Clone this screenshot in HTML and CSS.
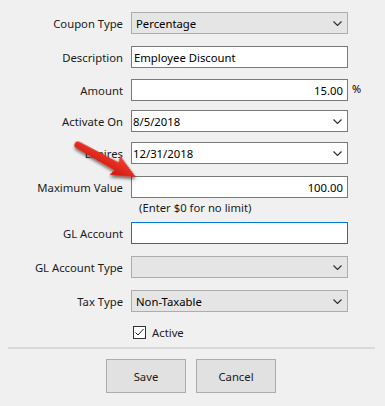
FILE: index.html
```html
<!DOCTYPE html>
<html>
<head>
<meta charset="utf-8">
<link rel="stylesheet" href="styles.css">
</head>
<body>
<div class="form">
  <div class="row">
    <span class="lbl">Coupon Type</span>
    <div class="combo"><span class="val pad5">Percentage</span><svg class="chev" width="9" height="5" viewBox="0 0 9 5"><path d="M0.5 0.5 L4.5 4.5 L8.5 0.5" fill="none" stroke="#333" stroke-width="1.2"/></svg></div>
  </div>
  <div class="row mt12">
    <span class="lbl">Description</span>
    <div class="text"><span class="val pad2">Employee Discount</span></div>
  </div>
  <div class="row mt11">
    <span class="lbl">Amount</span>
    <div class="text num"><span class="val">15.00</span></div>
    <span class="unit">%</span>
  </div>
  <div class="row mt9">
    <span class="lbl">Activate On</span>
    <div class="text date"><span class="val pad1">8/5/2018</span><svg class="chev" width="9" height="5" viewBox="0 0 9 5"><path d="M0.5 0.5 L4.5 4.5 L8.5 0.5" fill="none" stroke="#333" stroke-width="1.2"/></svg></div>
  </div>
  <div class="row mt10">
    <span class="lbl">Expires</span>
    <div class="text date"><span class="val pad1">12/31/2018</span><svg class="chev" width="9" height="5" viewBox="0 0 9 5"><path d="M0.5 0.5 L4.5 4.5 L8.5 0.5" fill="none" stroke="#333" stroke-width="1.2"/></svg></div>
  </div>
  <div class="row mt12">
    <span class="lbl">Maximum Value</span>
    <div class="text num"><span class="val">100.00</span></div>
  </div>
  <div class="hint">(Enter $0 for no limit)</div>
  <div class="row mt6">
    <span class="lbl">GL Account</span>
    <div class="text focus"></div>
  </div>
  <div class="row mt12">
    <span class="lbl">GL Account Type</span>
    <div class="combo"><span class="val pad5"></span><svg class="chev" width="9" height="5" viewBox="0 0 9 5"><path d="M0.5 0.5 L4.5 4.5 L8.5 0.5" fill="none" stroke="#333" stroke-width="1.2"/></svg></div>
  </div>
  <div class="row mt12">
    <span class="lbl">Tax Type</span>
    <div class="combo"><span class="val pad5">Non-Taxable</span><svg class="chev" width="9" height="5" viewBox="0 0 9 5"><path d="M0.5 0.5 L4.5 4.5 L8.5 0.5" fill="none" stroke="#333" stroke-width="1.2"/></svg></div>
  </div>
  <div class="check-row">
    <span class="cb"><svg width="11" height="11" viewBox="0 0 11 11"><path d="M1.5 5.5 L4 8 L9.5 2" fill="none" stroke="#222" stroke-width="1"/></svg></span>
    <span class="cb-label">Active</span>
  </div>
</div>
<div class="sep"></div>
<div class="buttons">
  <button class="btn">Save</button>
  <button class="btn">Cancel</button>
</div>
<svg class="arrow" width="80" height="56" viewBox="0 0 80 56">
  <defs>
    <filter id="sh" x="-20%" y="-20%" width="150%" height="160%">
      <feDropShadow dx="1.5" dy="2" stdDeviation="1.6" flood-color="#000" flood-opacity="0.55"/>
    </filter>
    <linearGradient id="rg" x1="0" y1="0" x2="0" y2="1">
      <stop offset="0" stop-color="#f2402e"/>
      <stop offset="1" stop-color="#cc140e"/>
    </linearGradient>
  </defs>
  <g transform="translate(7,8) rotate(28.9)" filter="url(#sh)">
    <path d="M0 -3.6 L44 -4.6 L42 -11 L66 0 L42 11 L44 4.6 L0 3.6 A3.6 3.6 0 0 1 0 -3.6 Z" fill="url(#rg)"/>
  </g>
</svg>
</body>
</html>
```
FILE: styles.css
```css
html, body {
  margin: 0;
  padding: 0;
  background: #f0f0f0;
}
body {
  position: relative;
  width: 385px;
  height: 406px;
  overflow: hidden;
  font-family: "Noto Sans", "Open Sans", sans-serif;
  font-size: 11.3px;
  color: #000;
}
.form {
  padding-top: 12px;
}
.row {
  display: grid;
  grid-template-columns: 123px 217px auto;
  column-gap: 8px;
  align-items: center;
  height: 22px;
}
.mt6 { margin-top: 6px; }
.mt9 { margin-top: 9px; }
.mt10 { margin-top: 10px; }
.mt11 { margin-top: 11px; }
.mt12 { margin-top: 12px; }
.lbl {
  text-align: right;
  color: #1b1b1b;
  white-space: nowrap;
}
.combo, .text {
  box-sizing: border-box;
  height: 22px;
  display: flex;
  align-items: center;
  justify-content: space-between;
  border: 1px solid #adadad;
  background: #e5e5e5;
}
.text {
  background: #fff;
  border-color: #7a7a7a;
}
.text.focus {
  border-color: #0078d7;
}
.text.num {
  justify-content: flex-end;
  padding-right: 4px;
}
.val {
  white-space: nowrap;
}
.pad1 { padding-left: 1px; }
.pad2 { padding-left: 2px; }
.pad5 { padding-left: 4px; }
.chev {
  margin-right: 5px;
}
.unit {
  margin-left: -4px;
  font-size: 11px;
  align-self: start;
  margin-top: 2px;
}
.hint {
  margin-top: 2px;
  padding-left: 139px;
  height: 16px;
  line-height: 16px;
  color: #1b1b1b;
}
.check-row {
  display: flex;
  align-items: center;
  margin-top: 13px;
  padding-left: 133px;
  height: 14px;
  gap: 6px;
}
.cb {
  box-sizing: border-box;
  width: 13px;
  height: 13px;
  border: 1px solid #333;
  background: #fff;
  display: flex;
}
.cb-label {
  color: #1b1b1b;
}
.sep {
  margin: 8px 10px 0 8px;
  height: 2px;
  background: #dadada;
}
.buttons {
  display: flex;
  gap: 10px;
  padding-left: 106px;
  margin-top: 10px;
}
.btn {
  box-sizing: border-box;
  width: 80px;
  height: 34px;
  border: 1px solid #adadad;
  background: #e1e1e1;
  font-family: "Noto Sans", "Open Sans", sans-serif;
  font-size: 11.3px;
  color: #1b1b1b;
  padding: 0;
}
.arrow {
  position: absolute;
  left: 71px;
  top: 137px;
}
```
